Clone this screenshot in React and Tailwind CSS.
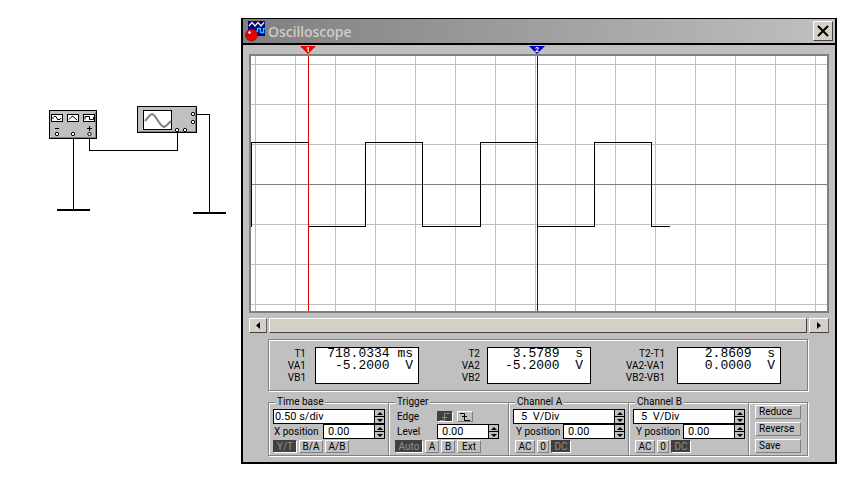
import React, { useState } from 'react';

const readouts = [
    { labels: ['T1', 'VA1', 'VB1'], values: ['718.0334 ms', '-5.2000  V'], place: 'pr-[5px]', labelSize: 'w-[37px] mr-[9px]' },
    { labels: ['T2', 'VA2', 'VB2'], values: ['3.5789  s', '-5.2000  V'], place: 'pr-[7px]', labelSize: 'w-[58px] mr-[7px]' },
    { labels: ['T2-T1', 'VA2-VA1', 'VB2-VB1'], values: ['2.8609  s', '0.0000  V'], place: 'pr-[5px]', labelSize: 'w-[71px] mr-[12px]' },
];

const Circuit = () => (
    <svg width="241" height="230" viewBox="0 0 241 230" shapeRendering="crispEdges" aria-label="Circuit">
        {/* wires and grounds */}
        <g fill="none" stroke="#000">
            <path d="M73.5 138V209M89.5 138V150.5H177.5V132M197 114.5H209.5V212" />
            <path d="M57 210H90M193 213H226" strokeWidth="2" />
        </g>

        {/* function generator */}
        <rect x="49.5" y="110.5" width="47" height="28" fill="#c0c0c0" stroke="#000" />
        <path d="M51 137.5H95.5V112" fill="none" stroke="#808080" />
        <g fill="#fff" stroke="#000">
            <rect x="51.5" y="114.5" width="11" height="7" />
            <rect x="67.5" y="114.5" width="11" height="7" />
            <rect x="83.5" y="114.5" width="11" height="7" />
        </g>
        <g fill="none" stroke="#000" shapeRendering="auto">
            <path d="M53 119V117.5L54 116.5H56L57.5 119.5H60L61 118" />
            <path d="M69 119.5L72.5 116L77 120" />
            <path d="M85 119.5V116.5H89.5V119.5H93.5V117" />
        </g>
        <path d="M55 128.5H59M87 128.5H92M89.5 126V131" fill="none" stroke="#000" />
        <g fill="#fff" stroke="#000" shapeRendering="auto">
            <circle cx="57" cy="134" r="1.7" />
            <circle cx="73" cy="134" r="1.7" />
            <circle cx="89.5" cy="134" r="1.7" />
        </g>

        {/* oscilloscope */}
        <rect x="137.5" y="106.5" width="59" height="26" fill="#c0c0c0" stroke="#000" />
        <path d="M139 131.5H195.5V108" fill="none" stroke="#808080" />
        <rect x="143.5" y="110.5" width="28" height="19" fill="#fff" stroke="#000" />
        <path d="M145 121L150 115L152 114L154 115L161 125L164 127L166 126L171 121" fill="none" stroke="#808080" strokeWidth="2" shapeRendering="auto" />
        <g fill="#fff" stroke="#000" shapeRendering="auto">
            <circle cx="193" cy="114" r="1.7" />
            <circle cx="193" cy="122" r="1.7" />
            <circle cx="177" cy="130" r="1.7" />
            <circle cx="185" cy="130" r="1.7" />
        </g>
    </svg>
);

const Screen = () => (
    <div className="mx-[6px]">
        <svg className="block h-[9px] w-full" aria-hidden="true">
            <path d="M51 1H67L59 9Z" fill="#f00000" />
            <path d="M280 1H296L288 9Z" fill="#0000c8" />
            <text x="59" y="7" fontSize="7" fontWeight="bold" textAnchor="middle" fill="#fff">1</text>
            <text x="288" y="7" fontSize="7" fontWeight="bold" textAnchor="middle" fill="#fff">2</text>
        </svg>
        <div className="border-2 border-[#808080] bg-white">
            <svg className="block h-[255px] w-full" shapeRendering="crispEdges" aria-label="Trace">
                <defs>
                    <pattern id="grid" x="4" y="8" width="40" height="40" patternUnits="userSpaceOnUse">
                        <path d="M0.5 0V40M0 0.5H40" stroke="#c0c0c0" />
                    </pattern>
                </defs>
                <rect width="100%" height="100%" fill="url(#grid)" />
                <line x1="0" x2="100%" y1="128.5" y2="128.5" stroke="#808080" />
                <path
                    d="M0.5 171V86.5H57M57 170.5H114.5V86.5H171.5V170.5H229.5V86.5H286M286 170.5H343.5V86.5H400.5V170.5H419"
                    fill="none"
                    stroke="#000"
                />
                <path d="M57.5 0V255" stroke="#e00000" />
                <path d="M286.5 0V255" stroke="#0000e0" />
            </svg>
        </div>
    </div>
);

const Scrollbar = () => (
    <div className="mx-[6px] mt-[5px] flex h-[15px] gap-[2px]">
        <button aria-label="Scroll left" className="flex w-[18px] items-center justify-center border border-t-white border-l-white border-r-[#606060] border-b-[#404040] bg-[#d4d0c8]">
            <svg width="4" height="7"><path d="M4 0V7L0 3.5Z" /></svg>
        </button>
        <button aria-label="Scroll thumb" className="flex-1 border border-t-white border-l-white border-r-[#404040] border-b-[#404040] bg-[#d4d0c8]" />
        <button aria-label="Scroll right" className="flex w-5 items-center justify-center border border-t-white border-l-white border-r-[#606060] border-b-[#404040] bg-[#d4d0c8]">
            <svg width="4" height="7"><path d="M0 0V7L4 3.5Z" /></svg>
        </button>
    </div>
);

const Readout = ({ item }) => (
    <div className="flex">
        <div className={`${item.labelSize} pt-px text-right leading-3`}>
            {item.labels.map((label) => <div key={label}>{label}</div>)}
        </div>
        <div className={`${item.place} h-[37px] w-[104px] border border-black bg-white text-right font-['Liberation_Mono',monospace] text-[13px] leading-3 whitespace-pre`}>
            {item.values.map((value) => <div key={value}>{value}</div>)}
        </div>
    </div>
);

const Spin = ({ label, start, wide }) => {
    const [value, setValue] = useState(start);

    return (
        <div className={`flex h-[15px] border border-black bg-white ${wide ? 'w-full' : 'w-[62px]'}`}>
            <input
                aria-label={label}
                value={value}
                onChange={(e) => setValue(e.target.value)}
                className={`min-w-0 flex-1 text-[11px] leading-[13px] outline-none ${wide === 'volts' ? 'pl-[7px]' : wide ? 'pl-px' : 'pl-1'}`}
            />
            <div className="flex w-[10px] flex-col border-l border-black bg-[#c0c0c0]">
                <button aria-label={`${label} up`} className="flex flex-1 items-center justify-center border-b border-black">
                    <svg width="6" height="3"><path d="M0 3H6L3 0Z" /></svg>
                </button>
                <button aria-label={`${label} down`} className="flex flex-1 items-center justify-center">
                    <svg width="6" height="3"><path d="M0 0H6L3 3Z" /></svg>
                </button>
            </div>
        </div>
    );
};

const Key = ({ children, on, label, size }) => (
    <button
        aria-label={label}
        aria-pressed={!!on}
        className={`flex items-center justify-center border leading-[11px] ${size} ${on ? 'border-t-[#404040] border-l-[#404040] border-r-white border-b-white bg-[#404040] text-[#909090]' : 'border-t-white border-l-white border-r-[#808080] border-b-[#808080]'}`}
    >
        {children}
    </button>
);

const Group = ({ title, children }) => (
    <fieldset className="-mr-px min-w-0 border border-[#808080] pt-px pr-[3px] pb-[2px] pl-1 shadow-[1px_1px_0_#fff,inset_1px_1px_0_#fff]">
        <legend className="ml-[2px] bg-[#c0c0c0] px-[2px] leading-3">{title}</legend>
        <div className="flex flex-col">{children}</div>
    </fieldset>
);

const Channel = ({ name }) => (
    <Group title={`Channel ${name}`}>
        <Spin label={`Channel ${name} scale`} start="5  V/Div" wide="volts" />
        <div className="flex items-center justify-between">
            <span className="pl-[3px]">Y position</span>
            <Spin label={`Channel ${name} Y position`} start="0.00" />
        </div>
        <div className="mt-px flex gap-[2px] pl-[2px]">
            <Key size="h-[13px] w-5">AC</Key>
            <Key size="h-[13px] w-3">0</Key>
            <Key size="h-[13px] w-5" on>DC</Key>
        </div>
    </Group>
);

const App = () => {
    return (
        <div className="flex min-h-screen items-start bg-white font-[Roboto,sans-serif] text-[10px] text-black">
            <Circuit />
            <main className="mt-[18px] mr-[29px] min-w-0 flex-1 border-2 border-t border-black bg-[#c0c0c0] pb-[6px]">
                <header className="flex h-[26px] items-center border-b-2 border-black bg-linear-to-r from-[#808080] to-[#c0c0c0] px-[2px]">
                    <svg width="21" height="22" viewBox="0 0 21 22" aria-hidden="true">
                        <rect x="3" y="1" width="17" height="15" fill="#000090" />
                        <path d="M4 6L7 2.5L10 6L13 2.5L16 6L19 2.5" fill="none" stroke="#ffffa0" strokeWidth="1.3" />
                        <path d="M9 11.5H12.5V8.5H15.5V12.5H18.5V8.5H20" fill="none" stroke="#20d0ff" strokeWidth="1.3" />
                        <circle cx="6.5" cy="15" r="6" fill="#e80000" stroke="#900000" strokeWidth="0.6" />
                        <circle cx="4.5" cy="12.5" r="1.3" fill="#fff" />
                    </svg>
                    <h1 className="ml-[2px] flex-1 font-['Noto_Sans',sans-serif] text-[14px] font-medium text-[#d4d0c8]">Oscilloscope</h1>
                    <button aria-label="Close" className="flex h-5 w-5 items-center justify-center border border-t-white border-l-white border-r-[#404040] border-b-[#404040] bg-[#d4d0c8]">
                        <svg width="12" height="12" viewBox="0 0 12 12"><path d="M1 1L11 11M11 1L1 11" stroke="#000" strokeWidth="2" /></svg>
                    </button>
                </header>

                <Screen />
                <Scrollbar />

                <section className="mt-[6px] mr-[27px] ml-[25px] flex h-[52px] justify-between border border-[#808080] pt-[7px] pr-[26px] shadow-[1px_1px_0_#fff,inset_1px_1px_0_#fff]">
                    {readouts.map((item) => <Readout key={item.labels[0]} item={item} />)}
                </section>

                <section className="mt-[5px] mr-[27px] ml-[25px] grid grid-cols-[2fr_2fr_2fr_2fr_1fr]">
                    <Group title="Time base">
                        <Spin label="Time base scale" start="0.50 s/div" wide="time" />
                        <div className="flex items-center justify-between">
                            <span className="pl-px">X position</span>
                            <Spin label="X position" start="0.00" />
                        </div>
                        <div className="mt-px flex gap-[2px]">
                            <Key size="h-[13px] w-6" on>Y/T</Key>
                            <Key size="h-[13px] w-6">B/A</Key>
                            <Key size="h-[13px] w-6">A/B</Key>
                        </div>
                    </Group>

                    <Group title="Trigger">
                        <div className="flex h-[15px] items-center gap-1">
                            <span className="w-10 pl-1">Edge</span>
                            <Key label="Rising edge" size="h-[11px] w-4" on>
                                <svg width="12" height="8" fill="none" stroke="currentColor"><path d="M1 7.5H5.5V0.5H11M3 4.5H8" /></svg>
                            </Key>
                            <Key label="Falling edge" size="h-[11px] w-4">
                                <svg width="12" height="8" fill="none" stroke="currentColor"><path d="M1 0.5H5.5V7.5H11M3 3.5H8" /></svg>
                            </Key>
                        </div>
                        <div className="flex items-center">
                            <span className="w-11 pl-1">Level</span>
                            <Spin label="Level" start="0.00" />
                        </div>
                        <div className="mt-px flex gap-[2px] pl-[2px]">
                            <Key size="h-[13px] w-7" on>Auto</Key>
                            <Key size="h-[13px] w-[14px]">A</Key>
                            <Key size="h-[13px] w-[14px]">B</Key>
                            <Key size="h-[13px] w-6">Ext</Key>
                        </div>
                    </Group>

                    <Channel name="A" />
                    <Channel name="B" />

                    <div className="mt-[6px] flex flex-col gap-[3px] border border-[#808080] px-[6px] py-[2px] shadow-[1px_1px_0_#fff,inset_1px_1px_0_#fff]">
                        {['Reduce', 'Reverse', 'Save'].map((name) => (
                            <button key={name} className="h-[14px] border border-t-white border-l-white border-r-[#808080] border-b-[#808080] pl-[3px] text-left leading-3">
                                {name}
                            </button>
                        ))}
                    </div>
                </section>
            </main>
        </div>
    );
};

export default App;
